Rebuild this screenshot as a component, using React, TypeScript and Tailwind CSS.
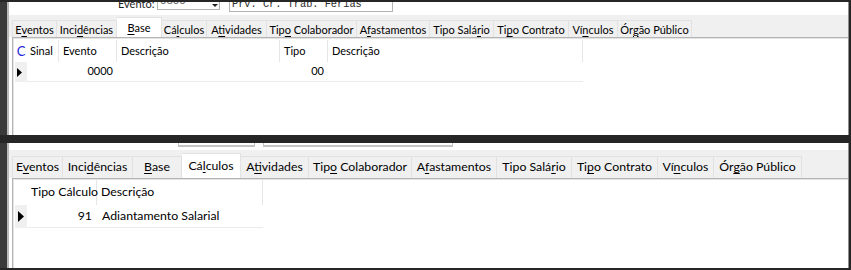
import React from 'react';

type TabDef = { label: string; u: number; w: string };

const topTabs: TabDef[] = [
  { label: 'Eventos', u: 1, w: 'w-[45px]' },
  { label: 'Incidências', u: 4, w: 'w-[60px]' },
  { label: 'Base', u: 0, w: 'w-[45px]' },
  { label: 'Cálculos', u: 2, w: 'w-[45px]' },
  { label: 'Atividades', u: 1, w: 'w-[60px]' },
  { label: 'Tipo Colaborador', u: 3, w: 'w-[90px]' },
  { label: 'Afastamentos', u: 1, w: 'w-[73px]' },
  { label: 'Tipo Salário', u: 9, w: 'w-[64px]' },
  { label: 'Tipo Contrato', u: 2, w: 'w-[75px]' },
  { label: 'Vínculos', u: 2, w: 'w-[49px]' },
  { label: 'Órgão Público', u: 2, w: 'w-[74px]' },
];

const bottomTabs: TabDef[] = [
  { label: 'Eventos', u: 1, w: 'w-[51px]' },
  { label: 'Incidências', u: 4, w: 'w-[70px]' },
  { label: 'Base', u: 0, w: 'w-[49px]' },
  { label: 'Cálculos', u: 2, w: 'w-[59px]' },
  { label: 'Atividades', u: 1, w: 'w-[68px]' },
  { label: 'Tipo Colaborador', u: 3, w: 'w-[103px]' },
  { label: 'Afastamentos', u: 1, w: 'w-[85px]' },
  { label: 'Tipo Salário', u: 9, w: 'w-[75px]' },
  { label: 'Tipo Contrato', u: 2, w: 'w-[86px]' },
  { label: 'Vínculos', u: 2, w: 'w-[56px]' },
  { label: 'Órgão Público', u: 2, w: 'w-[88px]' },
];

function Mnemonic({ label, u }: { label: string; u: number }) {
  return (
    <>
      {label.slice(0, u)}
      <span className="underline decoration-1 underline-offset-[2px]">{label.charAt(u)}</span>
      {label.slice(u + 1)}
    </>
  );
}

function TabStrip({ tabs, active, big }: { tabs: TabDef[]; active: number; big?: boolean }) {
  return (
    <div className={`flex items-end pl-[3px] bg-[#f0f0f0] shrink-0 ${big ? 'h-[28px] text-[12.3px]' : 'h-[22px] text-[11px]'}`}>
      {tabs.map((t, i) => {
        const sel = i === active;
        const h = big ? (sel ? 'h-[25px]' : 'h-[22px]') : sel ? 'h-[20px]' : 'h-[17px]';
        return (
          <div
            key={t.label}
            className={`${t.w} ${h} flex items-center justify-center whitespace-nowrap border-t border-r border-[#e2e2e2] ${i === 0 ? 'border-l' : ''} ${sel ? 'bg-white' : 'bg-[#f0f0f0]'}`}
          >
            <span className="leading-none">
              <Mnemonic label={t.label} u={t.u} />
            </span>
          </div>
        );
      })}
    </div>
  );
}

function Pointer({ big }: { big?: boolean }) {
  return big ? (
    <svg width="6" height="11" viewBox="0 0 6 11">
      <polygon points="0,0 6,5.5 0,11" fill="#000" />
    </svg>
  ) : (
    <svg width="5" height="9" viewBox="0 0 5 9">
      <polygon points="0,0 5,4.5 0,9" fill="#000" />
    </svg>
  );
}

function Panel({ children }: { children: React.ReactNode }) {
  return (
    <div className="flex-1 ml-[3px] border-t border-l border-[#b4b4b4] flex flex-col min-h-0">
      <div className="flex-1 border-t border-l border-[#e4e4e4] pl-[1px] bg-white">{children}</div>
    </div>
  );
}

function TopWindow() {
  return (
    <div className="flex h-[133px] shrink-0">
      <div className="w-[7px] bg-[#3a3a3a]" />
      <div className="flex-1 mr-[2px] border-l-2 border-r border-l-[#b9b9b9] border-r-[#8e8e8e] bg-white flex flex-col overflow-hidden">
        {/* header, cut at the top */}
        <div className="h-[13px] shrink-0 flex items-end overflow-hidden">
          <div className="ml-[109px] w-[39px] mb-[5px] text-[11px] leading-[13px] text-[#1e1e1e]">Evento:</div>
          <div className="w-[63px] h-[20px] mb-[5px] border border-[#b3b3b3] flex items-end justify-between pl-[2px] pb-[3px] shrink-0">
            <span className="text-[11px] leading-[13px] text-[#6a6a6a]">0800</span>
            <svg width="6" height="10" viewBox="0 0 6 10" className="mr-[1px] mb-[-2px]">
              <polygon points="0,3 6,3 3,0" fill="#222" />
              <polygon points="0,6 6,6 3,9" fill="#222" />
            </svg>
          </div>
          <div className="ml-[9px] w-[164px] h-[20px] mb-[3px] border border-[#b3b3b3] flex items-end pl-[2px] pb-[1px] shrink-0">
            <span className="font-['Liberation_Mono',monospace] text-[10.3px] leading-[12px] text-[#2a2a2a] whitespace-nowrap">
              Prv. Cr. Trab. Férias
            </span>
          </div>
        </div>

        <TabStrip tabs={topTabs} active={2} />

        <Panel>
          <div className="pt-[1px] text-[11px]">
            <div className="flex h-[22px]">
              <div className="w-[12px] flex items-center justify-center text-[13px] leading-none text-[#1d1dd6]">C</div>
              <div className="w-[32px] pl-[3px] flex items-center border-r border-[#e6e6e6]">Sinal</div>
              <div className="w-[58px] pl-[4px] flex items-center border-r border-[#e6e6e6]">Evento</div>
              <div className="w-[163px] pl-[4px] flex items-center border-r border-[#e6e6e6]">Descrição</div>
              <div className="w-[48px] pl-[4px] flex items-center border-r border-[#e6e6e6]">Tipo</div>
              <div className="w-[255px] pl-[4px] flex items-center border-r border-[#e6e6e6]">Descrição</div>
            </div>
            <div className="flex h-[20px]">
              <div className="w-[12px] bg-[#f0f0f0] flex items-center pl-[2px]">
                <Pointer />
              </div>
              <div className="flex border-b border-[#ebebeb]">
                <div className="w-[32px]" />
                <div className="w-[58px] pr-[4px] flex items-center justify-end">0000</div>
                <div className="w-[163px]" />
                <div className="w-[48px] pr-[4px] flex items-center justify-end">00</div>
                <div className="w-[255px]" />
              </div>
            </div>
          </div>
        </Panel>
      </div>
    </div>
  );
}

function BottomWindow() {
  return (
    <div className="flex h-[125px] shrink-0">
      <div className="w-[7px] bg-[#3a3a3a]" />
      <div className="flex-1 mr-[2px] border-l-2 border-r border-l-[#b9b9b9] border-r-[#8e8e8e] bg-white flex flex-col overflow-hidden">
        <div className="h-[7px] shrink-0 flex items-start">
          <div className="ml-[169px] w-[77px] h-[4px] border-x border-b-2 border-[#c4c4c4]" />
          <div className="ml-[8px] w-[190px] h-[4px] border-x border-b-2 border-[#c4c4c4]" />
        </div>

        <TabStrip tabs={bottomTabs} active={3} big />

        <Panel>
          <div className="text-[12.3px]">
            <div className="flex h-[25px]">
              <div className="w-[12px]" />
              <div className="w-[70px] pl-[4px] flex items-center border-r border-[#e6e6e6] whitespace-nowrap">Tipo Cálculo</div>
              <div className="w-[166px] pl-[4px] flex items-center border-r border-[#e6e6e6]">Descrição</div>
            </div>
            <div className="flex h-[23px]">
              <div className="w-[12px] bg-[#f0f0f0] flex items-center pl-[3px]">
                <Pointer big />
              </div>
              <div className="flex border-b border-[#ebebeb]">
                <div className="w-[70px] pr-[5px] flex items-center justify-end">91</div>
                <div className="w-[166px] pl-[5px] flex items-center whitespace-nowrap">Adiantamento Salarial</div>
              </div>
            </div>
          </div>
        </Panel>
      </div>
    </div>
  );
}

export default function App() {
  return (
    <div className="w-[851px] h-[270px] overflow-hidden bg-[#262626] flex flex-col pt-[2px] font-['Lato','Noto_Sans',sans-serif] text-black">
      <TopWindow />
      <div className="h-[8px] shrink-0" />
      <BottomWindow />
    </div>
  );
}
